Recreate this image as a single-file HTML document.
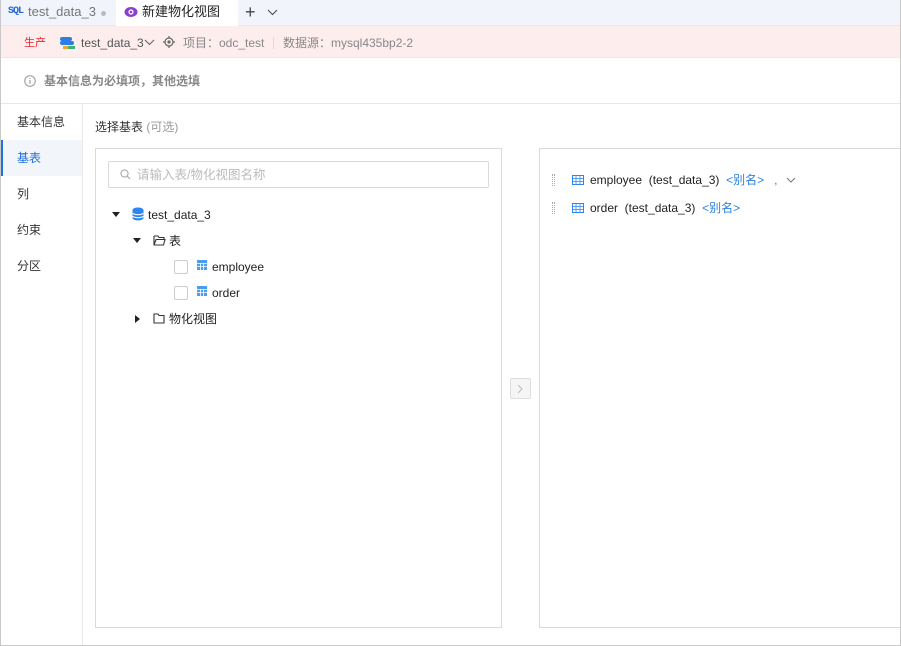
<!DOCTYPE html>
<html><head><meta charset="utf-8"><style>
*{box-sizing:border-box;margin:0;padding:0}
body{width:901px;height:646px;overflow:hidden;background:#fff;font-family:"Liberation Sans","Noto Sans CJK SC",sans-serif;font-size:12px;line-height:14px;color:#333;position:relative}
.abs{position:absolute;white-space:nowrap}
.frame{left:0;top:0;width:901px;height:646px;border-left:1px solid #c8c8c8;border-right:1px solid #c8c8c8;border-bottom:1px solid #c8c8c8}
</style></head><body>
<div class="abs" style="left:0;top:0;width:901px;height:26px;background:#f1f4fa;border-bottom:1px solid #e4e8ef"></div>
<div class="abs" style="left:8px;top:6px;font-size:10px;line-height:12px;font-weight:bold;color:#1f63d6;font-family:'Liberation Mono',monospace;letter-spacing:-1px">SQL</div>
<div class="abs" style="left:28px;top:5px;font-size:13px;color:#777">test_data_3</div>
<div class="abs" style="left:101px;top:11px;width:5px;height:5px;border-radius:50%;background:#bbb"></div>
<div class="abs" style="left:116px;top:0;width:122px;height:26px;background:#fff"></div>
<svg class="abs" style="left:124px;top:6px" width="14" height="12" viewBox="0 0 14 12"><ellipse cx="7" cy="6" rx="6.5" ry="5" fill="#8a3fd1"/><circle cx="7" cy="6" r="2.6" fill="#fff"/><circle cx="7" cy="6" r="1.3" fill="#8a3fd1"/></svg>
<div class="abs" style="left:142px;top:5px;font-size:13px;color:#222">新建物化视图</div>
<div class="abs" style="left:245px;top:3px;font-size:18px;line-height:18px;color:#444;font-weight:300">+</div>
<svg class="abs" style="left:267px;top:9px" width="11" height="7"><path d="M1 1l4.5 4.5L10 1" fill="none" stroke="#555" stroke-width="1.2"/></svg>
<div class="abs" style="left:0;top:26px;width:901px;height:32px;background:#fdeded;border-bottom:1px solid #e8e8ee"></div>
<div class="abs" style="left:24px;top:36px;color:#f5222d;font-size:11px">生产</div>
<svg class="abs" style="left:60px;top:36px" width="16" height="14"><rect x="0" y="1" width="12" height="4" rx="2" fill="#2b7fe0"/><rect x="0" y="5" width="14" height="4" rx="2" fill="#2b7fe0"/><rect x="3" y="10" width="5" height="3" fill="#f4a52b"/><rect x="8" y="10" width="7" height="3" fill="#3cb371"/></svg>
<div class="abs" style="left:81px;top:36px;color:#555">test_data_3</div>
<svg class="abs" style="left:144px;top:39px" width="11" height="7"><path d="M1 1l4.5 4.5L10 1" fill="none" stroke="#666" stroke-width="1.1"/></svg>
<svg class="abs" style="left:163px;top:36px" width="12" height="12"><circle cx="6" cy="6" r="4" fill="none" stroke="#666" stroke-width="1.2"/><circle cx="6" cy="6" r="1.6" fill="#666"/><path d="M6 0v2M6 10v2M0 6h2M10 6h2" stroke="#666" stroke-width="1.2"/></svg>
<div class="abs" style="left:183px;top:36px;color:#888">项目：odc_test</div>
<div class="abs" style="left:273px;top:37px;width:1px;height:12px;background:#ddd"></div>
<div class="abs" style="left:283px;top:36px;color:#888">数据源：mysql435bp2-2</div>
<div class="abs" style="left:0;top:103px;width:901px;height:1px;background:#e8e8e8"></div>
<svg class="abs" style="left:24px;top:75px" width="12" height="12"><circle cx="6" cy="6" r="5.3" fill="none" stroke="#999"/><path d="M6 5v4M6 3v1" stroke="#999" stroke-width="1.1"/></svg>
<div class="abs" style="left:44px;top:74px;color:#888;font-weight:bold">基本信息为必填项，其他选填</div>
<div class="abs" style="left:82px;top:104px;width:1px;height:542px;background:#e8e8e8"></div>
<div class="abs" style="left:1px;top:140px;width:81px;height:36px;background:#f2f5fa;border-left:2px solid #1f6fe5"></div>
<div class="abs" style="left:17px;top:115px;color:#333">基本信息</div>
<div class="abs" style="left:17px;top:151px;color:#1f6fe5">基表</div>
<div class="abs" style="left:17px;top:187px">列</div>
<div class="abs" style="left:17px;top:223px">约束</div>
<div class="abs" style="left:17px;top:259px">分区</div>
<div class="abs" style="left:95px;top:120px">选择基表 <span style="color:#999">(可选)</span></div>
<div class="abs" style="left:95px;top:148px;width:407px;height:480px;border:1px solid #d9d9d9"></div>
<div class="abs" style="left:108px;top:161px;width:381px;height:27px;border:1px solid #d9d9d9;border-radius:2px"></div>
<svg class="abs" style="left:120px;top:169px" width="11" height="11"><circle cx="4.5" cy="4.5" r="3.6" fill="none" stroke="#aaa" stroke-width="1.1"/><path d="M7 7l3 3" stroke="#aaa" stroke-width="1.2"/></svg>
<div class="abs" style="left:137px;top:168px;color:#bbb;font-size:12.5px">请输入表/物化视图名称</div>
<svg class="abs" style="left:112px;top:212px" width="8" height="6"><path d="M0 0h8L4 5z" fill="#222"/></svg>
<svg class="abs" style="left:132px;top:207px" width="12" height="14"><ellipse cx="6" cy="3" rx="5.5" ry="2.5" fill="#2b87ef"/><rect x="0.5" y="3" width="11" height="8" fill="#2b87ef"/><ellipse cx="6" cy="11" rx="5.5" ry="2.5" fill="#2b87ef"/><path d="M0.5 6.5q5.5 2.5 11 0M0.5 9.5q5.5 2.5 11 0" stroke="#fff" fill="none"/></svg>
<div class="abs" style="left:148px;top:208px;color:#222">test_data_3</div>
<svg class="abs" style="left:133px;top:238px" width="8" height="6"><path d="M0 0h8L4 5z" fill="#222"/></svg>
<svg class="abs" style="left:153px;top:235px" width="13" height="11"><path d="M1 1h4l1 1.5h5v2M1 1v9h9.5l1.5-5.5H3L1 10" fill="none" stroke="#333" stroke-width="1.1"/></svg>
<div class="abs" style="left:169px;top:234px;color:#222">表</div>
<div class="abs" style="left:174px;top:260px;width:14px;height:14px;border:1px solid #ccc;border-radius:2px"></div>
<div class="abs" style="left:174px;top:286px;width:14px;height:14px;border:1px solid #ccc;border-radius:2px"></div>
<svg class="abs" style="left:197px;top:260px" width="10" height="10"><rect width="10" height="10" fill="#4b9df0"/><path d="M0 3.5h10M0 6.5h10M3.5 3v7M6.5 3v7" stroke="#fff" stroke-width=".8"/></svg>
<svg class="abs" style="left:197px;top:286px" width="10" height="10"><rect width="10" height="10" fill="#4b9df0"/><path d="M0 3.5h10M0 6.5h10M3.5 3v7M6.5 3v7" stroke="#fff" stroke-width=".8"/></svg>
<div class="abs" style="left:212px;top:260px;color:#222">employee</div>
<div class="abs" style="left:212px;top:286px;color:#222">order</div>
<svg class="abs" style="left:135px;top:315px" width="6" height="8"><path d="M0 0v8l5-4z" fill="#222"/></svg>
<svg class="abs" style="left:153px;top:313px" width="12" height="11"><path d="M1 1h4l1 1.5h5V10H1z" fill="none" stroke="#333" stroke-width="1.1"/></svg>
<div class="abs" style="left:169px;top:312px;color:#222">物化视图</div>
<div class="abs" style="left:510px;top:378px;width:21px;height:21px;border:1px solid #ddd;background:#f5f5f5;border-radius:2px"></div>
<svg class="abs" style="left:517px;top:384px" width="7" height="10"><path d="M1 1l4 4-4 4" fill="none" stroke="#bbb" stroke-width="1"/></svg>
<div class="abs" style="left:539px;top:148px;width:370px;height:480px;border:1px solid #d9d9d9"></div>
<div class="abs" style="left:552px;top:174px;width:3px;height:12px;border-left:1px dotted #aaa;border-right:1px dotted #aaa"></div>
<div class="abs" style="left:552px;top:202px;width:3px;height:12px;border-left:1px dotted #aaa;border-right:1px dotted #aaa"></div>
<svg class="abs" style="left:572px;top:175px" width="12" height="10"><rect x=".5" y=".5" width="11" height="9" fill="none" stroke="#2b87ef"/><path d="M0 3.5h12M0 6.5h12M4 0v10M8 0v10" stroke="#2b87ef" stroke-width=".8"/></svg>
<svg class="abs" style="left:572px;top:203px" width="12" height="10"><rect x=".5" y=".5" width="11" height="9" fill="none" stroke="#2b87ef"/><path d="M0 3.5h12M0 6.5h12M4 0v10M8 0v10" stroke="#2b87ef" stroke-width=".8"/></svg>
<div class="abs" style="left:590px;top:173px;color:#222">employee &nbsp;(test_data_3) &nbsp;<span style="color:#2b7fe0">&lt;别名&gt;</span> &nbsp;&nbsp;<span style="color:#2b7fe0">,</span></div>
<svg class="abs" style="left:786px;top:177px" width="10" height="6"><path d="M1 1l4 4 4-4" fill="none" stroke="#777" stroke-width="1"/></svg>
<div class="abs" style="left:590px;top:201px;color:#222">order &nbsp;(test_data_3) &nbsp;<span style="color:#2b7fe0">&lt;别名&gt;</span></div>
<div class="abs frame"></div>
</body></html>
